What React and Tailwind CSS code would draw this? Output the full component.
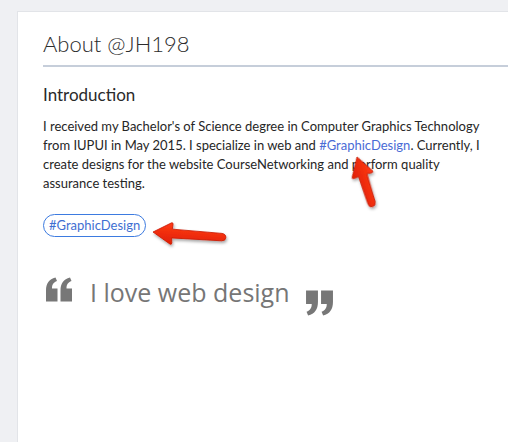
import React from "react";

function QuoteOpen({ className }) {
  return (
    <svg viewBox="0 0 28 24" className={className} fill="currentColor">
      <path d="M1 24 V13 C1 6 4 1.5 10.5 0 L12 3.5 C8.5 5 7 7 7 11 H12.5 V24 Z" />
      <path d="M15.5 24 V13 C15.5 6 18.5 1.5 25 0 L26.5 3.5 C23 5 21.5 7 21.5 11 H27 V24 Z" />
    </svg>
  );
}

function QuoteClose({ className }) {
  return (
    <svg viewBox="0 0 28 24" className={className} fill="currentColor">
      <g transform="rotate(180 14 12)">
        <path d="M1 24 V13 C1 6 4 1.5 10.5 0 L12 3.5 C8.5 5 7 7 7 11 H12.5 V24 Z" />
        <path d="M15.5 24 V13 C15.5 6 18.5 1.5 25 0 L26.5 3.5 C23 5 21.5 7 21.5 11 H27 V24 Z" />
      </g>
    </svg>
  );
}

// Callout arrow: tip at the local origin, tail running along +x.
function Arrow({ x, y, angle, length }) {
  const L = length;
  const d = `M0 0 L18 -10.5 Q19.5 -11 19.5 -9 L19 -4.2 L${L - 3} -3.4 Q${L + 1} -3 ${L + 1} 0.5 Q${L + 1} 4 ${L - 3} 4 L19 4.6 L19.5 9.5 Q19.5 11.5 18 11 Z`;
  return (
    <g transform={`translate(${x} ${y}) rotate(${angle})`}>
      <path d={d} fill="url(#arrowFill)" stroke="#c81a05" strokeWidth="0.8" />
    </g>
  );
}

export default function App() {
  return (
    <div className="relative min-h-[442px] w-[508px] overflow-hidden bg-[#eff0f3] pl-[17px] pt-[11px]">
      <div className="h-[431px] border-l border-t border-[#e2e4e8] bg-white pl-[25px]">
        <h1 className="pt-[18px] text-[22px] font-light leading-[28px] text-[#2c2c2c] [font-family:Lato,'Noto_Sans',sans-serif]">
          About @JH198
        </h1>
        <div className="mt-[7px] h-[2px] bg-[#c6ceda]" />

        <div className="pr-[20px] [font-family:Lato,'Noto_Sans',sans-serif]">
          <h2 className="mt-[17px] text-[17px] leading-[22px] text-[#2a2a2a]">Introduction</h2>
          <p className="mt-[11px] text-[13px] leading-[19px] text-[#262626]">
            I received my Bachelor's of Science degree in Computer Graphics Technology from IUPUI in May 2015. I specialize in web and{" "}
            <span className="text-[#4a6bd6]">#GraphicDesign</span>. Currently, I create designs for the website CourseNetworking and perform quality assurance testing.
          </p>

          <div className="mt-[21px] flex">
            <span className="rounded-full border border-[#3d7be0] px-[5px] text-[13px] leading-[21px] text-[#3f6fd2]">
              #GraphicDesign
            </span>
          </div>
        </div>

        <div className="mt-[40px] flex items-start text-[#777] [font-family:'Open_Sans','Noto_Sans',sans-serif]">
          <QuoteOpen className="ml-[2px] h-[25px] w-[28px]" />
          <span className="ml-[17px] text-[25px] leading-[30px] text-[#767676]">I love web design</span>
          <QuoteClose className="mt-[13px] ml-[15px] h-[26px] w-[29px]" />
        </div>
      </div>

      <svg className="pointer-events-none absolute inset-0" width="508" height="442">
        <defs>
          <linearGradient id="arrowFill" x1="0" y1="0" x2="0" y2="1">
            <stop offset="0" stopColor="#ff3b16" />
            <stop offset="1" stopColor="#e01f04" />
          </linearGradient>
          <filter id="arrowShadow" x="-20%" y="-20%" width="140%" height="140%">
            <feDropShadow dx="1" dy="2" stdDeviation="1.5" floodColor="#000" floodOpacity="0.35" />
          </filter>
        </defs>
        <g filter="url(#arrowShadow)">
          <Arrow x={153} y={232} angle={4} length={72} />
          <Arrow x={357} y={157} angle={72} length={51} />
        </g>
      </svg>
    </div>
  );
}
